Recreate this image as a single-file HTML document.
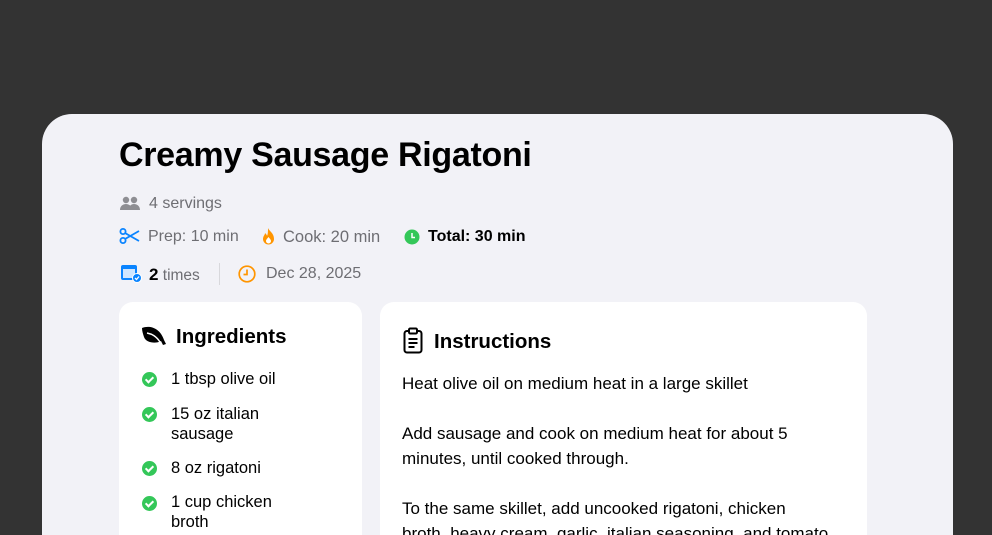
<!DOCTYPE html>
<html><head><style>
*{margin:0;padding:0;box-sizing:border-box}
html,body{width:992px;height:535px;overflow:hidden}
body{background:#333333;font-family:"Liberation Sans",sans-serif;position:relative}
.panel{position:absolute;left:42px;top:114px;width:911px;height:421px;background:#f2f2f7;border-radius:30px 30px 0 0}
.abs{position:absolute;white-space:nowrap}
h1{position:absolute;left:119px;top:136px;font-size:34px;font-weight:bold;color:#000;letter-spacing:-0.3px}
.g{color:#6e6e73;font-size:16px}
.card{position:absolute;background:#fff;border-radius:14px;top:302px;height:233px;border-radius:14px 14px 0 0}
.chk{position:absolute;left:142px;width:15px;height:15px;border-radius:50%;background:#34c759}
.chk:after{content:"";position:absolute;left:5px;top:3px;width:3px;height:6px;border:solid #fff;border-width:0 2px 2px 0;transform:rotate(45deg)}
.it{position:absolute;left:171px;font-size:16.5px;color:#000;line-height:20px}
.ins{position:absolute;left:402px;font-size:17px;color:#000;line-height:25px}
</style></head><body>
<div class="panel"></div>
<h1>Creamy Sausage Rigatoni</h1>
<svg class="abs" style="left:120px;top:196px" width="20" height="14" viewBox="0 0 20 14"><circle cx="6" cy="4" r="3.2" fill="#8e8e93"/><circle cx="14" cy="4" r="3.2" fill="#8e8e93"/><path d="M0 14c0-4 3-6 6-6s6 2 6 6z M9 14c0-4 2-6 5-6s6 2 6 6z" fill="#8e8e93"/></svg>
<div class="abs g" style="left:149px;top:195px">4 servings</div>
<svg class="abs" style="left:119px;top:228px" width="21" height="16" viewBox="0 0 21 16" fill="none" stroke="#0a84ff" stroke-width="1.8"><circle cx="4" cy="3.5" r="2.6"/><circle cx="4" cy="12.5" r="2.6"/><path d="M6 5l14 8M6 11l14-8"/></svg>
<div class="abs g" style="left:148px;top:228px">Prep: 10 min</div>
<svg class="abs" style="left:262px;top:227px" width="13" height="18" viewBox="0 0 13 18"><path d="M6 1c1 3 6 5 6 11a5.5 5.5 0 0 1-11 0c0-3 2-4 2-6 1 1 2 2 2 3 1-2 1-5 1-8z" fill="#ff9500"/><path d="M6.5 10c1 1.5 2.5 2.5 2.5 4a2.5 2.5 0 0 1-5 0c0-1.5 1.5-2.5 2.5-4z" fill="#fff"/></svg>
<div class="abs g" style="left:283px;top:228px;font-size:16.5px">Cook: 20 min</div>
<svg class="abs" style="left:404px;top:229px" width="16" height="16" viewBox="0 0 16 16"><circle cx="8" cy="8" r="7.5" fill="#34c759"/><path d="M8 4v4.5h3" stroke="#fff" stroke-width="1.5" fill="none"/></svg>
<div class="abs" style="left:428px;top:228px;font-size:16px;font-weight:bold;color:#000">Total: 30 min</div>
<svg class="abs" style="left:120px;top:264px" width="22" height="19" viewBox="0 0 22 19"><rect x="1" y="1" width="16" height="15" rx="2" fill="#0a84ff"/><rect x="3" y="5" width="12" height="9" fill="#cfe6ff"/><circle cx="17" cy="14" r="4.5" fill="#0a84ff" stroke="#fff" stroke-width="1"/><path d="M15 14l1.5 1.5 2.5-3" stroke="#fff" stroke-width="1.3" fill="none"/></svg>
<div class="abs" style="left:149px;top:265px;font-size:15.5px;color:#6e6e73"><b style="color:#000;font-size:17px">2</b> times</div>
<div class="abs" style="left:219px;top:263px;width:1px;height:22px;background:#d8d8dc"></div>
<svg class="abs" style="left:238px;top:265px" width="18" height="18" viewBox="0 0 18 18" fill="none" stroke="#ff9500" stroke-width="1.7"><circle cx="9" cy="9" r="7.8"/><path d="M9 4.5v5H5.5"/></svg>
<div class="abs g" style="left:266px;top:265px">Dec 28, 2025</div>

<div class="card" style="left:119px;width:243px"></div>
<div class="card" style="left:380px;width:487px"></div>
<svg class="abs" style="left:141px;top:326px" width="26" height="20" viewBox="0 0 26 20"><path d="M1 2c8-3 18 0 22 12l2 4-3 1-2-4C15 18 5 17 3 11 2 8 1 5 1 2z" fill="#000"/><path d="M6 7c5 1 9 3 13 9" stroke="#fff" stroke-width="1.5" fill="none"/></svg>
<div class="abs" style="left:176px;top:325px;font-size:20.5px;font-weight:bold">Ingredients</div>
<div class="chk" style="top:372px"></div><div class="it" style="top:369px">1 tbsp olive oil</div>
<div class="chk" style="top:407px"></div><div class="it" style="top:404px">15 oz italian<br>sausage</div>
<div class="chk" style="top:461px"></div><div class="it" style="top:458px">8 oz rigatoni</div>
<div class="chk" style="top:496px"></div><div class="it" style="top:492px">1 cup chicken<br>broth</div>
<svg class="abs" style="left:403px;top:327px" width="20" height="27" viewBox="0 0 20 27" fill="none" stroke="#000" stroke-width="2"><rect x="1.5" y="4" width="17" height="21.5" rx="2.5"/><rect x="6" y="1.5" width="8" height="5" rx="1.2" fill="#fff"/><path d="M5.5 12h9M5.5 16h9M5.5 20h6"/></svg>
<div class="abs" style="left:434px;top:330px;font-size:20.5px;font-weight:bold">Instructions</div>
<div class="ins" style="top:371px">Heat olive oil on medium heat in a large skillet</div>
<div class="ins" style="top:421px">Add sausage and cook on medium heat for about 5<br>minutes, until cooked through.</div>
<div class="ins" style="top:496px">To the same skillet, add uncooked rigatoni, chicken<br>broth, heavy cream, garlic, italian seasoning, and tomato</div>
</body></html>
